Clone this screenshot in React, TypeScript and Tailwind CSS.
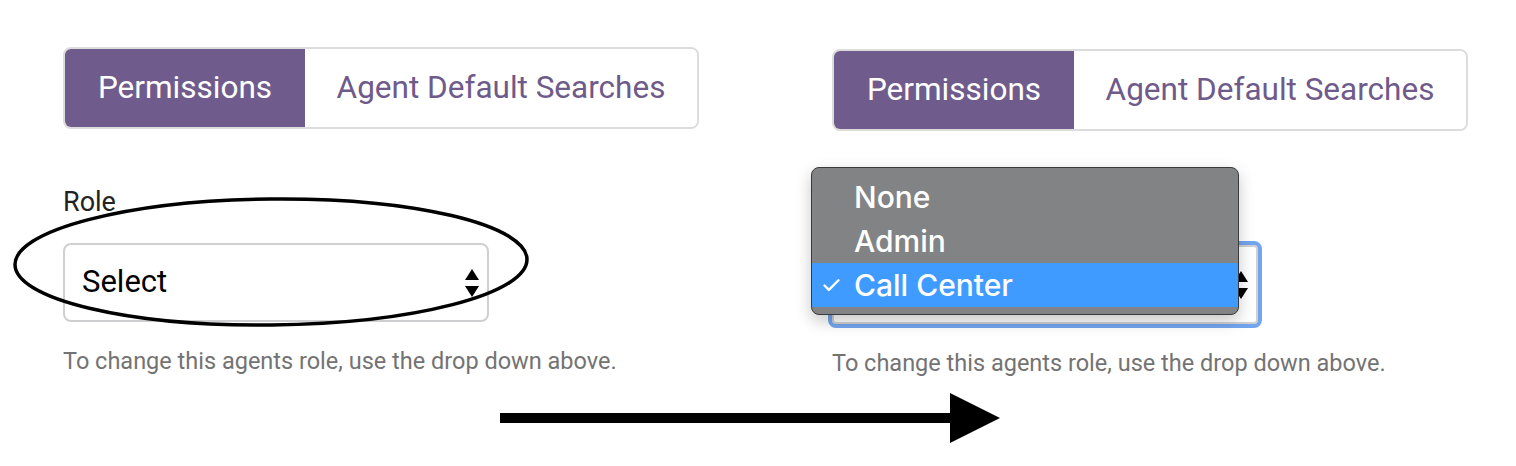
import { Check } from 'lucide-react';

function Tabs() {
  return (
    <div className="flex h-[82px] w-[636px] overflow-hidden rounded-[8px] border-2 border-[#dcdcdc] font-['Roboto',sans-serif] text-[31.5px]">
      <div className="flex w-[240px] items-center justify-center bg-[#705c8c] text-white">Permissions</div>
      <div className="flex flex-1 items-center justify-center bg-white text-[#6e5a8b]">Agent Default Searches</div>
    </div>
  );
}

function SelectArrows() {
  return (
    <svg width="14" height="28" viewBox="0 0 14 28" className="shrink-0">
      <polygon points="7,0 14,11 0,11" fill="#000" />
      <polygon points="0,17 14,17 7,28" fill="#000" />
    </svg>
  );
}

function Helper() {
  return (
    <p className="mt-[27px] font-['Roboto',sans-serif] text-[23.5px] leading-[24px] text-[#737373]">
      To change this agents role, use the drop down above.
    </p>
  );
}

export default function App() {
  const options = ['None', 'Admin', 'Call Center'];

  return (
    <div className="relative h-[466px] w-[1516px] overflow-hidden bg-white">
      <div className="flex gap-[133px] pl-[63px] pt-[47px]">
        {/* before */}
        <div className="w-[636px]">
          <Tabs />
          <div className="mt-[58px] font-['Roboto',sans-serif] text-[27px] leading-[30px] text-[#222]">Role</div>
          <div className="mt-[26px] flex h-[79px] w-[426px] items-center justify-between rounded-[8px] border-2 border-[#cfcfd2] bg-white pl-[17px] pr-[8px] font-['Roboto',sans-serif] text-[31px] text-black">
            <span>Select</span>
            <SelectArrows />
          </div>
          <Helper />
        </div>

        {/* after: label is hidden under the open menu */}
        <div className="relative mt-[2px] w-[636px]">
          <Tabs />
          <div className="mt-[58px] h-[30px]" />
          <div className="mt-[26px] flex h-[79px] w-[426px] items-center justify-between rounded-[4px] border-2 border-[#d0d0d0] bg-white pl-[17px] pr-[8px] outline-[4px] outline-[#5b95ec]/85" >
            <span />
            <SelectArrows />
          </div>
          <Helper />

          <div className="absolute left-[-21px] top-[118px] w-[428px] rounded-[8px] border border-[#3a3a3a] bg-[#828385] py-[7px] font-['Inter',sans-serif] text-[30px] font-medium text-white shadow-[0_6px_16px_rgba(0,0,0,0.22)]">
            {options.map((opt) => {
              const active = opt === 'Call Center';
              return (
                <div
                  key={opt}
                  className={
                    active
                      ? 'relative flex h-[44px] items-center bg-[#3f9bff] pl-[42px]'
                      : 'relative flex h-[44px] items-center pl-[42px]'
                  }
                >
                  {active && <Check className="absolute left-[9px] h-[21px] w-[21px]" strokeWidth={2.75} />}
                  {opt}
                </div>
              );
            })}
          </div>
        </div>
      </div>

      {/* annotations */}
      <svg className="pointer-events-none absolute left-0 top-0" width="1516" height="466">
        <ellipse cx="271" cy="262" rx="256" ry="63" fill="none" stroke="#000" strokeWidth="3.5" transform="rotate(-0.6 271 262)" />
        <rect x="500" y="413" width="452" height="10" fill="#000" />
        <polygon points="950,393 1000,418 950,443" fill="#000" />
      </svg>
    </div>
  );
}
